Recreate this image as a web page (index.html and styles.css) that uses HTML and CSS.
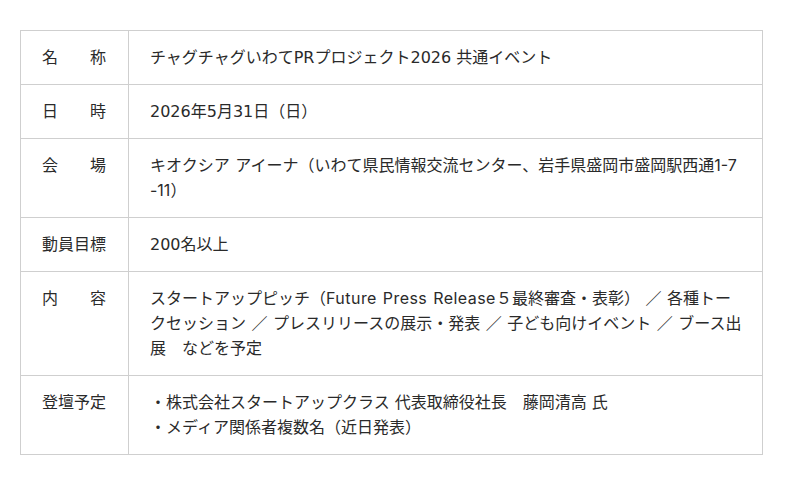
FILE: index.html
```html
<!DOCTYPE html>
<html lang="ja">
<head>
<meta charset="utf-8">
<link rel="stylesheet" href="styles.css">
</head>
<body>
<div class="wrap">
<table class="info">
  <tr>
    <th>名　　称</th>
    <td>チャグチャグいわてPRプロジェクト2026 共通イベント</td>
  </tr>
  <tr>
    <th>日　　時</th>
    <td>2026年5月31日（日）</td>
  </tr>
  <tr>
    <th>会　　場</th>
    <td class="alt">キオクシア アイーナ（いわて県民情報交流センター、岩手県盛岡市盛岡駅西通1-7-11）</td>
  </tr>
  <tr>
    <th>動員目標</th>
    <td>200名以上</td>
  </tr>
  <tr>
    <th>内　　容</th>
    <td class="alt">スタートアップピッチ（<span class="en">Future Press Release</span>５最終審査・表彰） ／ 各種トークセッション ／ プレスリリースの展示・発表 ／ 子ども向けイベント ／ ブース出展　などを予定</td>
  </tr>
  <tr>
    <th>登壇予定</th>
    <td>・株式会社スタートアップクラス 代表取締役社長　藤岡清高 氏<br>・メディア関係者複数名（近日発表）</td>
  </tr>
</table>
</div>
</body>
</html>
```

FILE: styles.css
```css
html, body {
  margin: 0;
  padding: 0;
  background: #fff;
}
.wrap {
  padding: 30px 38px 0 20px;
}
.info {
  border-collapse: collapse;
  width: 743px;
  font-family: "DejaVu Sans", "Noto Sans CJK JP", sans-serif;
  font-size: 16px;
  line-height: 25px;
  color: #2a2a2a;
}
.info th,
.info td {
  border: 1px solid #cfcfcf;
  padding: 14px 20px 14px 21px;
  text-align: left;
  vertical-align: top;
  font-weight: normal;
}
.info th {
  width: 66px;
  white-space: nowrap;
}
.info td {
  word-break: break-all;
}
.info .alt {
  font-family: "Inter", "Noto Sans CJK JP", sans-serif;
  word-spacing: 1px;
}
.info .en {
  letter-spacing: 0.45px;
}
```
